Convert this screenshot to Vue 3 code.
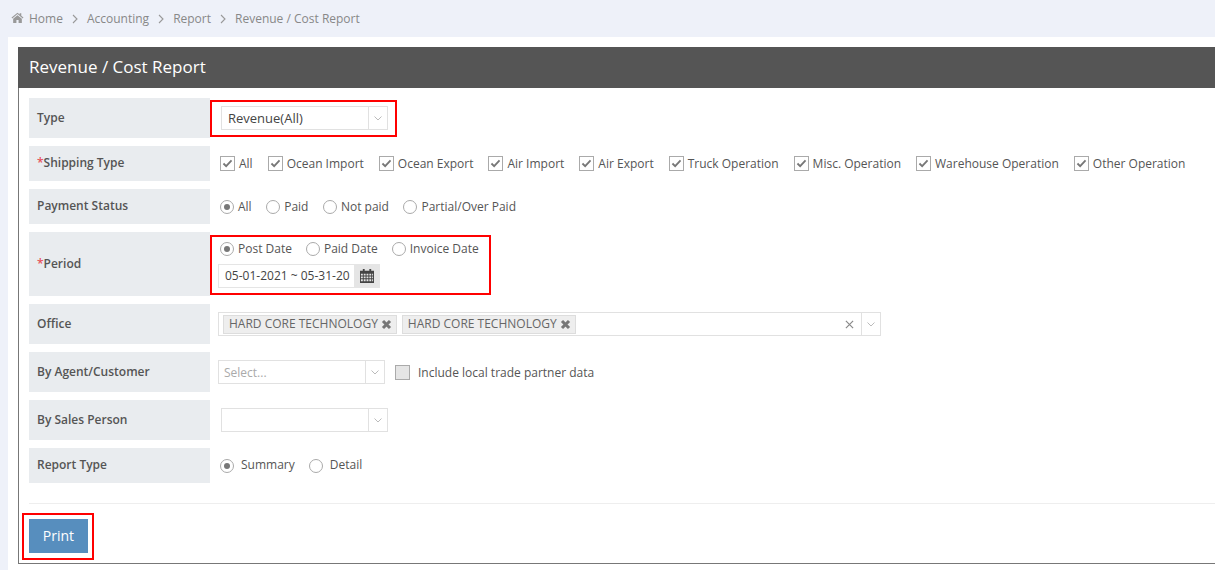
<script setup>
const crumbs = ['Accounting', 'Report', 'Revenue / Cost Report']
const shipping = ['All', 'Ocean Import', 'Ocean Export', 'Air Import', 'Air Export', 'Truck Operation', 'Misc. Operation', 'Warehouse Operation', 'Other Operation']
const payment = ['All', 'Paid', 'Not paid', 'Partial/Over Paid']
const period = ['Post Date', 'Paid Date', 'Invoice Date']
const offices = ['HARD CORE TECHNOLOGY', 'HARD CORE TECHNOLOGY']
</script>

<template>
  <div class="page">
    <nav class="crumbs">
      <svg class="home" viewBox="0 0 24 20" width="13" height="11"><path fill="#999" d="M12 1 1 10.2l1.3 1.5L12 3.700l9.700 8 1.300-1.500-4-3.300V2h-3v2.300zM4 12.500V20h6v-5.500h4V20h6v-7.500L12 5.800z"/></svg>
      <span class="crumb">Home</span>
      <template v-for="c in crumbs" :key="c">
        <svg class="sep" viewBox="0 0 6 10" width="6" height="10"><path d="M1 1l4 4-4 4" fill="none" stroke="#999" stroke-width="1.100"/></svg>
        <span class="crumb">{{ c }}</span>
      </template>
    </nav>
    <main class="panel">
      <section class="portlet">
        <header class="title">Revenue / Cost Report</header>
        <div class="body">
          <div class="row h40">
            <div class="label">Type</div>
            <div class="value pad-select">
              <div class="select sel-type">
                <span class="sel-text dark">Revenue(All)</span>
                <span class="arrow"><svg viewBox="0 0 8 5" width="8" height="5"><path d="M.5.500 4 4 7.500.5" fill="none" stroke="#bbb"/></svg></span>
              </div>
            </div>
          </div>

          <div class="row h35">
            <div class="label"><i class="req">*</i>Shipping Type</div>
            <div class="value options ship">
              <label v-for="s in shipping" :key="s" class="opt">
                <span class="check"><svg viewBox="0 0 12 10" width="11" height="9"><path d="M1.500 5 4.500 8l6-6.500" fill="none" stroke="#777" stroke-width="2"/></svg></span><span class="txt">{{ s }}</span>
              </label>
            </div>
          </div>

          <div class="row h35">
            <div class="label">Payment Status</div>
            <div class="value options pay">
              <label v-for="(p, i) in payment" :key="p" class="opt">
                <span class="radio" :class="{ on: i === 0 }"></span><span class="txt">{{ p }}</span>
              </label>
            </div>
          </div>

          <div class="row h64">
            <div class="label"><i class="req">*</i>Period</div>
            <div class="value stack">
              <div class="options per">
                <label v-for="(p, i) in period" :key="p" class="opt">
                  <span class="radio" :class="{ on: i === 0 }"></span><span class="txt">{{ p }}</span>
                </label>
              </div>
              <div class="date">
                <span class="date-text">05-01-2021 ~ 05-31-20</span>
                <span class="addon">
                  <svg viewBox="0 0 15 15" width="14" height="14"><path fill="#444" d="M3 0h2v2h5V0h2v2h3v13H0V2h3zM1 5v2h2V5zm3 0v2h2V5zm3 0v2h2V5zm3 0v2h2V5zM1 8v2h2V8zm3 0v2h2V8zm3 0v2h2V8zm3 0v2h2V8zM1 11v2h2v-2zm3 0v2h2v-2zm3 0v2h2v-2zm3 0v2h2v-2zM13 5v2h1V5zm0 3v2h1V8zm0 3v2h1v-2z"/></svg>
                </span>
              </div>
            </div>
          </div>

          <div class="row h40">
            <div class="label">Office</div>
            <div class="value">
              <div class="select sel-office">
                <div class="tags">
                  <span v-for="(o, i) in offices" :key="i" class="tag"><span class="txt">{{ o }}</span>
                    <svg viewBox="0 0 10 10" width="11" height="11"><path d="M1.800 1.800l6.400 6.400M8.200 1.800 1.800 8.200" stroke="#777" stroke-width="2.800"/></svg>
                  </span>
                </div>
                <svg class="clear" viewBox="0 0 10 10" width="9" height="9"><path d="M1 1l8 8M9 1 1 9" stroke="#888" stroke-width="1.300"/></svg>
                <span class="arrow"><svg viewBox="0 0 8 5" width="8" height="5"><path d="M.5.500 4 4 7.500.5" fill="none" stroke="#bbb"/></svg></span>
              </div>
            </div>
          </div>

          <div class="row h40">
            <div class="label">By Agent/Customer</div>
            <div class="value agent">
              <div class="select sel-agent">
                <span class="sel-text ph">Select...</span>
                <span class="arrow"><svg viewBox="0 0 8 5" width="8" height="5"><path d="M.5.500 4 4 7.500.5" fill="none" stroke="#bbb"/></svg></span>
              </div>
              <label class="opt local"><span class="check off"></span><span class="txt">Include local trade partner data</span></label>
            </div>
          </div>

          <div class="row h40">
            <div class="label">By Sales Person</div>
            <div class="value pad-select">
              <div class="select sel-type">
                <span class="sel-text"></span>
                <span class="arrow"><svg viewBox="0 0 8 5" width="8" height="5"><path d="M.5.500 4 4 7.500.5" fill="none" stroke="#bbb"/></svg></span>
              </div>
            </div>
          </div>

          <div class="row h35">
            <div class="label">Report Type</div>
            <div class="value options rep">
              <label class="opt"><span class="radio on"></span><span class="txt">Summary</span></label>
              <label class="opt"><span class="radio"></span><span class="txt">Detail</span></label>
            </div>
          </div>

          <div class="actions">
            <button class="print" type="button">Print</button>
          </div>
        </div>
      </section>
      <div class="mark mark-type"></div>
      <div class="mark mark-period"></div>
      <div class="mark mark-print"></div>
    </main>
  </div>
</template>

<style>
html, body { margin: 0; overflow: hidden; background: #fff; }
</style>

<style scoped>
.page {
  width: 1215px;
  height: 570px;
  overflow: hidden;
  background: #eef1f9;
  font-family: "Open Sans", "Liberation Sans", sans-serif;
  font-size: 12px;
  color: #555;
}
.crumbs {
  height: 37px;
  display: flex;
  align-items: center;
  padding-left: 11px;
  box-sizing: border-box;
}
.home { margin-right: 5px; position: relative; top: -1px; }
.crumb { color: #888; }
.sep { margin: 0 9px; }
.panel {
  position: relative;
  margin-left: 8px;
  height: 533px;
  width: 1300px;
  background: #fff;
  padding: 10px 0 0 10px;
  box-sizing: border-box;
}
.portlet {
  width: 1280px;
  height: 517px;
  box-sizing: border-box;
  border-left: 1px solid #777;
  border-bottom: 1px solid #777;
}
.title {
  height: 41px;
  margin-left: -1px;
  background: #555;
  color: #fff;
  font-size: 17px;
  line-height: 40px;
  padding-left: 11px;
}
.body { padding: 10px 0 0 10px; }
.row { display: flex; margin-bottom: 8px; }
.h40 { height: 40px; }
.h35 { height: 35px; }
.h64 { height: 64px; }
.label {
  width: 181px;
  flex: none;
  background: #e9ecef;
  display: flex;
  align-items: center;
  padding: 0 0 2px 8px;
  box-sizing: border-box;
  font-weight: 600;
  color: #555;
}
.req { color: #e7505a; font-style: normal; }
.value {
  display: flex;
  align-items: center;
  padding-left: 8px;
}
.pad-select { padding-left: 11px; }
.options { padding-left: 10px; }
.opt {
  display: flex;
  align-items: center;
  white-space: nowrap;
  color: #555;
}
.ship { gap: 15px; }
.ship .opt { gap: 4px; }
.pay { gap: 14.5px; }
.pay .opt, .per .opt { gap: 4px; }
.per { display: flex; gap: 14px; padding-left: 2px; align-items: center; height: 16px; }
.per .txt, .rep .txt { position: relative; top: -1px; }
.rep { gap: 14px; }
.rep .opt { gap: 7px; }
.check {
  width: 15px;
  height: 15px;
  box-sizing: border-box;
  border: 1px solid #aaa;
  display: flex;
  align-items: center;
  justify-content: center;
}
.check.off { background: #e5e5e5; }
.radio {
  width: 14px;
  height: 14px;
  box-sizing: border-box;
  border: 1px solid #aaa;
  border-radius: 50%;
  display: flex;
  align-items: center;
  justify-content: center;
}
.radio.on::after {
  content: "";
  width: 6px;
  height: 6px;
  border-radius: 50%;
  background: #777;
}
.stack {
  flex-direction: column;
  align-items: flex-start;
  justify-content: flex-start;
  padding-top: 9px;
  gap: 7px;
}
.select {
  height: 24px;
  box-sizing: border-box;
  border: 1px solid #e1e1e1;
  display: flex;
  align-items: center;
  background: #fff;
}
.sel-type { width: 167px; }
.sel-agent { width: 167px; }
.sel-office { width: 663px; }
.sel-text { flex: 1; padding-left: 5px; }
.dark { color: #444; font-size: 13px; padding-left: 6px; }
.ph { color: #aaa; font-size: 12px; }
.arrow {
  width: 18px;
  height: 22px;
  flex: none;
  border-left: 1px solid #e1e1e1;
  display: flex;
  align-items: center;
  justify-content: center;
}
.date {
  display: flex;
  width: 162px;
  height: 24px;
  box-sizing: border-box;
}
.date-text {
  width: 136px;
  box-sizing: border-box;
  border: 1px solid #e5e5e5;
  border-right: 0;
  padding-left: 6px;
  line-height: 21px;
  white-space: nowrap;
  overflow: hidden;
  color: #444;
}
.addon {
  width: 26px;
  background: #e5e5e5;
  display: flex;
  align-items: center;
  justify-content: center;
}
.tags { flex: 1; display: flex; gap: 5px; padding-left: 4px; }
.tag {
  height: 19px;
  box-sizing: border-box;
  background: #eee;
  border: 1px solid #ddd;
  padding: 0 4px 0 5px;
  display: flex;
  align-items: center;
  gap: 3px;
  font-size: 12px;
  color: #666;
  white-space: nowrap;
}
.tag .txt { position: relative; top: -1px; }
.clear { margin-right: 7px; }
.agent { gap: 10px; }
.local { gap: 8px; }
.actions {
  margin-top: 20px;
  margin-right: 0;
  border-top: 1px solid #eee;
  padding-top: 15px;
}
.print {
  width: 59px;
  height: 34px;
  background: #578ebe;
  border: 0;
  color: #fff;
  font-family: inherit;
  font-size: 14px;
  padding: 0 0 2px;
  display: block;
}
.mark {
  position: absolute;
  border: 2px solid #f00;
  box-sizing: border-box;
  pointer-events: none;
}
.mark-type { left: 202px; top: 63px; width: 187px; height: 37px; }
.mark-period { left: 202px; top: 198px; width: 281px; height: 60px; }
.mark-print { left: 14px; top: 476px; width: 72px; height: 47px; }
</style>
